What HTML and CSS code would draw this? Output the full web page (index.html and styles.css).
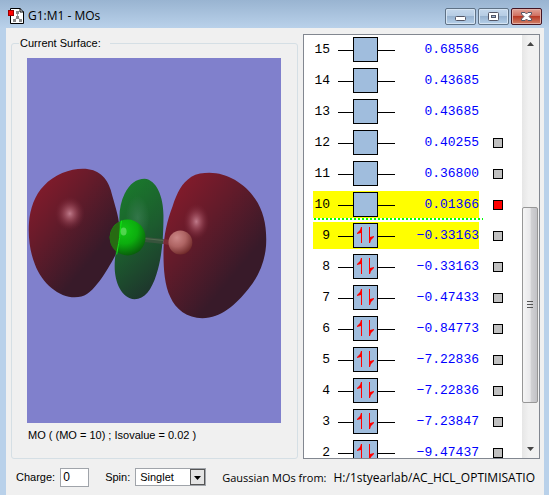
FILE: index.html
```
<!DOCTYPE html>
<html lang="en">
<head>
    <title>G1:M1 - MOs</title>
    <meta charset="UTF-8">
    <meta name="viewport" content="width=device-width, initial-scale=1.0">
    <link rel="stylesheet" href="styles.css">
</head>

<body>
    <!-- Shared drawings for the orbital rows -->
    <svg class="defs" width="0" height="0" aria-hidden="true">
        <symbol id="empty" viewBox="0 0 65 27">
            <path d="M8 14.5H23M48 14.5H65" stroke="#000"/>
            <rect x="23.5" y="1.5" width="24" height="24" fill="#a0bddd" stroke="#000"/>
        </symbol>
        <symbol id="full" viewBox="0 0 65 27">
            <use href="#empty" width="65" height="27"/>
            <path d="M31.5 5V21M39.5 5V21" stroke="#f00"/>
            <path d="M31 5L30 8L27 11V12L31 11ZM40 21L41 18L44 15V14L40 15Z" fill="#f00"/>
        </symbol>
    </svg>

    <header class="titlebar">
        <svg class="app-icon" width="16" height="16" viewBox="0 0 16 16">
            <path d="M2.5 0.5H12L15.5 4V15.5H2.5Z" fill="#fff" stroke="#000"/>
            <path d="M12 0V4H16" fill="none" stroke="#000"/>
            <path d="M9.5 5V9L6 13M9.5 9L13 13" fill="none" stroke="#999"/>
            <path d="M8 3h3v3H8zM8 8h3v3H8zM5 11h3v3H5zM11 11h3v3h-3z" fill="#888"/>
            <rect x="0.5" y="2.5" width="5" height="5" fill="#f00" stroke="#900"/>
        </svg>
        <h1>G1:M1 - MOs</h1>
        <button type="button" class="win-btn" aria-label="Minimize">
            <svg width="29" height="15" viewBox="0 0 29 15"><rect x="9.5" y="7.5" width="10" height="4" rx="1" fill="#fff" stroke="#535666"/></svg>
        </button>
        <button type="button" class="win-btn" aria-label="Maximize">
            <svg width="29" height="15" viewBox="0 0 29 15"><rect x="9.5" y="3.5" width="10" height="8" rx="1" fill="#fff" stroke="#535666"/><rect x="12.5" y="6.5" width="4" height="2" fill="#9fb9d6" stroke="#535666"/></svg>
        </button>
        <button type="button" class="win-btn close" aria-label="Close">
            <svg width="29" height="15" viewBox="0 0 29 15"><path d="M9.5 3.5H13L14.5 5L16 3.5H19.5V5L17 7.5L19.5 10V11.5H16L14.5 10L13 11.5H9.5V10L12 7.5L9.5 5Z" fill="#fff" stroke="#535666"/></svg>
        </button>
    </header>

    <main class="client">
        <div class="panels">
            <fieldset class="surface">
                <legend>Current Surface:</legend>
                <svg class="view" viewBox="0 0 255 366" role="img" aria-label="Molecular orbital surface">
                    <defs>
                        <linearGradient id="red" x1="0.2" y1="0" x2="0.75" y2="0.65">
                            <stop offset="0" stop-color="#851b2b"/>
                            <stop offset="0.45" stop-color="#641b2a"/>
                            <stop offset="1" stop-color="#381a29"/>
                        </linearGradient>
                        <linearGradient id="green" x1="0.3" y1="0" x2="0.65" y2="1">
                            <stop offset="0" stop-color="#1a7a2c"/>
                            <stop offset="0.5" stop-color="#1c5b2e"/>
                            <stop offset="1" stop-color="#1e332c"/>
                        </linearGradient>
                        <radialGradient id="shine">
                            <stop offset="0" stop-color="#c98595" stop-opacity="0.9"/>
                            <stop offset="0.4" stop-color="#ab5a6a" stop-opacity="0.6"/>
                            <stop offset="1" stop-color="#7a2536" stop-opacity="0"/>
                        </radialGradient>
                        <radialGradient id="glow">
                            <stop offset="0" stop-color="#3c7d54" stop-opacity="0.7"/>
                            <stop offset="1" stop-color="#3c7d54" stop-opacity="0"/>
                        </radialGradient>
                        <radialGradient id="chlorine" cx="0.4" cy="0.3" r="0.75">
                            <stop offset="0" stop-color="#12c814"/>
                            <stop offset="0.5" stop-color="#0cad0e"/>
                            <stop offset="1" stop-color="#08560a"/>
                        </radialGradient>
                        <radialGradient id="hydrogen" cx="0.35" cy="0.3" r="0.75">
                            <stop offset="0" stop-color="#cb8787"/>
                            <stop offset="0.5" stop-color="#ae6463"/>
                            <stop offset="1" stop-color="#6e2828"/>
                        </radialGradient>
                    </defs>
                    <path d="M56 111C72 111 80 120 84 132C88 147 92 158 93 170C94 186 91 194 87 201C82 210 76 220 71 226C63 236 58 240 48 240C32 240 15 226 8 207C3 195 1 180 2 165C3 151 8 137 17 128C27 117 43 111 56 111Z" fill="url(#red)"/>
                    <ellipse cx="43" cy="156" rx="15" ry="17" fill="url(#shine)"/>
                    <path d="M118 121C130 122 137 139 137 158C137 184 135 201 130 217C125 233 118 242 108 242C95 241 88 225 88 209C88 192 93 182 93 166C92 155 94 144 98 136C103 126 110 121 118 121Z" fill="url(#green)"/>
                    <ellipse cx="111" cy="160" rx="12" ry="22" fill="url(#glow)"/>
                    <path d="M183 115C201 115 219 126 229 141C238 154 241 170 240 188C239 203 233 219 222 232C210 247 195 261 176 261C161 261 149 252 144 240C138 228 137 211 137 195C137 178 141 162 146 149C151 134 155 126 165 119C170 116 177 115 183 115Z" fill="url(#red)"/>
                    <ellipse cx="170" cy="164" rx="13" ry="18" fill="url(#shine)"/>
                    <path d="M118 182L137 184" stroke="#37533c" stroke-width="5"/>
                    <path d="M118 181L137 183" stroke="#526b50" stroke-width="1"/>
                    <path d="M137 184L144 185" stroke="#7d2b36" stroke-width="5"/>
                    <circle cx="154" cy="185" r="12" fill="url(#hydrogen)"/>
                    <circle cx="101" cy="180" r="18" fill="url(#chlorine)"/>
                    <path d="M93 164A18 18 0 0 0 91 195L93 182Z" fill="#276b12"/>
                    <path d="M95 163L94 169L93 180L92 186L90 197" fill="none" stroke="#10e514"/>
                    <ellipse cx="97" cy="174" rx="3" ry="4" fill="#8ee887" opacity="0.5"/>
                </svg>
                <p class="caption">MO ( (MO = 10) ; Isovalue = 0.02 )</p>
            </fieldset>

            <section class="orbitals" aria-label="Orbital energies">
                <table>
                    <tr><th>15</th><td class="level"><svg><use href="#empty"/></svg></td><td class="energy">0.68586</td><td class="mark"></td></tr>
                    <tr><th>14</th><td class="level"><svg><use href="#empty"/></svg></td><td class="energy">0.43685</td><td class="mark"></td></tr>
                    <tr><th>13</th><td class="level"><svg><use href="#empty"/></svg></td><td class="energy">0.43685</td><td class="mark"></td></tr>
                    <tr><th>12</th><td class="level"><svg><use href="#empty"/></svg></td><td class="energy">0.40255</td><td class="mark"><i></i></td></tr>
                    <tr><th>11</th><td class="level"><svg><use href="#empty"/></svg></td><td class="energy">0.36800</td><td class="mark"><i></i></td></tr>
                    <tr class="selected lumo"><th>10</th><td class="level"><svg><use href="#empty"/></svg></td><td class="energy">0.01366</td><td class="mark"><i class="current"></i></td></tr>
                    <tr class="selected"><th>9</th><td class="level"><svg><use href="#full"/></svg></td><td class="energy">−0.33163</td><td class="mark"><i></i></td></tr>
                    <tr><th>8</th><td class="level"><svg><use href="#full"/></svg></td><td class="energy">−0.33163</td><td class="mark"><i></i></td></tr>
                    <tr><th>7</th><td class="level"><svg><use href="#full"/></svg></td><td class="energy">−0.47433</td><td class="mark"><i></i></td></tr>
                    <tr><th>6</th><td class="level"><svg><use href="#full"/></svg></td><td class="energy">−0.84773</td><td class="mark"><i></i></td></tr>
                    <tr><th>5</th><td class="level"><svg><use href="#full"/></svg></td><td class="energy">−7.22836</td><td class="mark"><i></i></td></tr>
                    <tr><th>4</th><td class="level"><svg><use href="#full"/></svg></td><td class="energy">−7.22836</td><td class="mark"><i></i></td></tr>
                    <tr><th>3</th><td class="level"><svg><use href="#full"/></svg></td><td class="energy">−7.23847</td><td class="mark"><i></i></td></tr>
                    <tr><th>2</th><td class="level"><svg><use href="#full"/></svg></td><td class="energy">−9.47437</td><td class="mark"><i></i></td></tr>
                </table>
                <div class="scrollbar">
                    <svg class="arrow" width="7" height="4" viewBox="0 0 7 4"><path d="M0 4L3.5 0L7 4Z" fill="#444"/></svg>
                    <div class="track">
                        <div class="thumb"><svg width="6" height="8" viewBox="0 0 6 8"><path d="M0 0.5H6M0 3.5H6M0 6.5H6" stroke="#555"/></svg></div>
                    </div>
                    <svg class="arrow" width="7" height="4" viewBox="0 0 7 4"><path d="M0 0L3.5 4L7 0Z" fill="#444"/></svg>
                </div>
            </section>
        </div>

        <form class="footer">
            <label for="charge">Charge:</label>
            <input type="text" id="charge" name="charge" value="0">
            <label for="spin">Spin:</label>
            <span class="dropdown">
                <select id="spin" name="spin">
                    <option>Singlet</option>
                    <option>Triplet</option>
                </select>
                <svg width="15" height="16" viewBox="0 0 15 16"><rect x="0.5" y="0.5" width="14" height="15" fill="#e4e4e4" stroke="#555"/><path d="M4 7H11L7.5 11Z"/></svg>
            </span>
            <span class="source">Gaussian MOs from:</span>
            <span class="path">H:/1styearlab/AC_HCL_OPTIMISATIO</span>
        </form>
    </main>
</body>
</html>
```
FILE: styles.css
```
* {
    box-sizing: border-box;
}

body {
    display: flex;
    flex-direction: column;
    height: 100vh;
    margin: 0;
    padding: 0 5px 0 6px;
    overflow: hidden;
    background: linear-gradient(#99b4d1, #b9d1ea 28px, #b9d1ea);
    font-family: "Liberation Sans", Arial, sans-serif;
    font-size: 11px;
    color: #000;
}

.defs {
    position: absolute;
}

/* Title bar */
.titlebar {
    display: flex;
    flex: none;
    align-items: center;
    gap: 2px;
    height: 28px;
    padding: 4px 2px 0;
}

.titlebar h1 {
    flex: 1;
    margin: 0 0 0 2px;
    font-family: "Open Sans", sans-serif;
    font-size: 12px;
    font-weight: normal;
    line-height: 16px;
}

.win-btn {
    width: 31px;
    height: 17px;
    padding: 0;
    border: 1px solid #5f7286;
    border-radius: 2px;
    background: linear-gradient(#c5d8ec, #b4cbe3 50%, #98b3d0 50%, #b5d0ea);
    box-shadow: inset 0 0 0 1px #d5e4f3;
}

.win-btn svg {
    display: block;
}

.win-btn.close {
    border-color: #431422;
    background: linear-gradient(#e0a297, #cf6b5b 50%, #b83a26 50%, #d2826a);
    box-shadow: inset 0 0 0 1px #e3aea5;
}

/* Window content */
.client {
    display: flex;
    flex: 1;
    flex-direction: column;
    min-height: 0;
    background: #f0f0f0;
}

.panels {
    display: grid;
    flex: 1;
    grid-template-columns: 287fr 237fr;
    grid-template-rows: minmax(0, 1fr);
    gap: 5px;
    min-height: 0;
    padding: 6px 4px 0 5px;
}

.surface {
    display: flex;
    flex-direction: column;
    min-width: 0;
    margin: 2px 0 0;
    padding: 8px 16px 16px 15px;
    border: 1px solid #d5dfe5;
    border-radius: 3px;
}

.surface legend {
    margin-left: -8px;
    padding: 0 9px 0 1px;
    font-size: 11px;
    line-height: 14px;
}

.view {
    display: block;
    flex: 1;
    width: 100%;
    min-height: 0;
    background: #8080cc;
}

.caption {
    margin: 5px 0 0 1px;
    line-height: 14px;
}

/* Orbital list */
.orbitals {
    display: flex;
    justify-content: space-between;
    align-items: flex-start;
    min-width: 0;
    overflow: hidden;
    border: 1px solid #828790;
    background: #fff;
}

table {
    margin-left: 9px;
    border-collapse: collapse;
    font-family: "Liberation Mono", monospace;
    font-size: 13px;
    line-height: 27px;
}

tr {
    position: relative;
    height: 31px;
}

th,
td {
    height: 31px;
    padding: 1px 0 3px;
    background-clip: content-box;
    text-align: right;
    vertical-align: top;
}

th {
    width: 17px;
    font-weight: normal;
}

.level svg {
    display: block;
    width: 65px;
    height: 27px;
}

.energy {
    width: 84px;
    color: #00f;
}

.mark {
    width: 24px;
}

.mark i {
    display: block;
    width: 10px;
    height: 10px;
    margin: 9px 0 0 14px;
    border: 1px solid #000;
    background: #c0c0c0;
}

.mark .current {
    background: #f00;
}

.selected th,
.selected .level,
.selected .energy {
    background-color: #ff0;
}

/* Line between empty and filled orbitals */
.lumo::after {
    content: "";
    position: absolute;
    left: 1px;
    right: 20px;
    bottom: 1px;
    height: 2px;
    background: repeating-linear-gradient(90deg, #0f0 0, #0f0 2px, transparent 2px, transparent 4px);
}

.scrollbar {
    display: flex;
    flex: none;
    flex-direction: column;
    align-items: center;
    align-self: stretch;
    width: 17px;
    padding: 7px 0;
    background: linear-gradient(90deg, #e6e6e6, #f1f1f1 40%);
}

.arrow {
    flex: none;
}

.track {
    display: flex;
    flex: 1;
    flex-direction: column;
    align-self: stretch;
    justify-content: flex-end;
    padding: 0 1px 44px 0;
}

.thumb {
    display: flex;
    align-items: center;
    justify-content: center;
    height: 55%;
    border: 1px solid #979797;
    border-radius: 2px;
    background: linear-gradient(90deg, #f5f5f5, #e9e9eb 50%, #d0d0d3 60%, #c2c2c6);
}

/* Charge, spin and file */
.footer {
    display: flex;
    flex: none;
    align-items: center;
    height: 36px;
    padding: 0 10px;
    white-space: nowrap;
}

#charge {
    width: 29px;
    height: 19px;
    margin: 0 16px 0 5px;
    padding: 0 2px;
    border: 1px solid #a0a4aa;
    background: #fff;
    font-family: "Liberation Sans", Arial, sans-serif;
    font-size: 12px;
}

.dropdown {
    position: relative;
    margin: 0 16px 0 5px;
}

.dropdown select {
    display: block;
    width: 71px;
    height: 18px;
    padding: 0 4px;
    border: 1px solid #a0a4aa;
    border-radius: 0;
    background: #fff;
    appearance: none;
    color: #000;
    font-family: "Liberation Sans", Arial, sans-serif;
    font-size: 11px;
}

.dropdown svg {
    position: absolute;
    top: 1px;
    right: 1px;
    pointer-events: none;
}

.source,
.path {
    font-family: "Open Sans", sans-serif;
    font-size: 11px;
}

.path {
    margin-left: 7px;
    font-size: 12px;
}
```
